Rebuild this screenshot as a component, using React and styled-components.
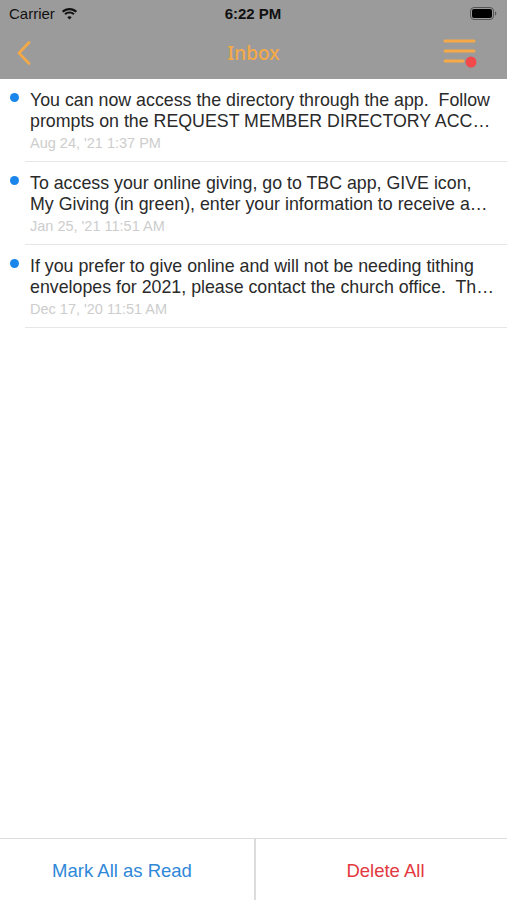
import React from 'react';
import styled, { createGlobalStyle } from 'styled-components';

const GlobalStyle = createGlobalStyle`
  html, body { margin: 0; padding: 0; background: #fff; }
  body { font-family: "Liberation Sans", Arial, sans-serif; }
`;

const Screen = styled.div`
  width: 507px;
  height: 900px;
  display: flex;
  flex-direction: column;
  background: #fff;
`;

const Header = styled.div`
  background: #9b9b9b;
`;

const StatusBar = styled.div`
  height: 27px;
  display: flex;
  align-items: center;
  justify-content: space-between;
  padding: 0 10px 0 9px;
  font-size: 15px;
  color: #111;
`;

const StatusLeft = styled.div`
  display: flex;
  align-items: center;
  gap: 6px;
  width: 120px;
`;

const Clock = styled.div`
  font-weight: bold;
  font-size: 15px;
`;

const StatusRight = styled.div`
  width: 120px;
  display: flex;
  justify-content: flex-end;
`;

const NavBar = styled.div`
  height: 52px;
  display: flex;
  align-items: center;
  justify-content: space-between;
  padding: 0 28px 0 16px;
`;

const NavTitle = styled.div`
  color: #f5a947;
  font-size: 19px;
  font-weight: 500;
  font-family: "Noto Sans", "Liberation Sans", sans-serif;
  padding-left: 12px;
`;

const NavSide = styled.div`
  width: 40px;
  display: flex;
  justify-content: ${p => (p.$right ? 'flex-end' : 'flex-start')};
`;

const List = styled.div`
  flex: 1;
`;

const Row = styled.div`
  display: flex;
  padding-left: 10px;
`;

const DotCol = styled.div`
  width: 20px;
  padding-top: 14px;
`;

const Dot = styled.div`
  width: 9px;
  height: 9px;
  border-radius: 50%;
  background: #1a86ec;
`;

const Body = styled.div`
  flex: 1;
  min-width: 0;
  border-bottom: 1px solid #e6e6e6;
  margin-left: -5px;
  padding: 11px 10px 9px 5px;
`;

const Line = styled.div`
  font-size: 17.8px;
  line-height: 21px;
  color: #2a2a2a;
  white-space: pre;
  overflow: hidden;
  text-overflow: ellipsis;
  padding-right: 2px;
`;

const Stamp = styled.div`
  font-size: 14.5px;
  color: #cdcdcd;
  margin-top: 3px;
  line-height: 17px;
`;

const Footer = styled.div`
  height: 61px;
  border-top: 1px solid #dcdcdc;
  display: grid;
  grid-template-columns: 254px 1fr;
`;

const FooterButton = styled.div`
  display: flex;
  align-items: center;
  justify-content: center;
  font-size: 18.5px;
  color: ${p => p.$color};
  border-left: ${p => (p.$divider ? '2px solid #dcdcdc' : 'none')};
  padding: 2px ${p => (p.$divider ? '0' : '10px')} 0 ${p => (p.$divider ? '8px' : '0')};
`;

const messages = [
  {
    first: 'You can now access the directory through the app.  Follow',
    rest: 'prompts on the REQUEST MEMBER DIRECTORY ACCESS screen to complete the request.',
    date: "Aug 24, '21 1:37 PM",
  },
  {
    first: 'To access your online giving, go to TBC app, GIVE icon,',
    rest: 'My Giving (in green), enter your information to receive an email.',
    date: "Jan 25, '21 11:51 AM",
  },
  {
    first: 'If you prefer to give online and will not be needing tithing',
    rest: 'envelopes for 2021, please contact the church office.  Thank you.',
    date: "Dec 17, '20 11:51 AM",
  },
];

const Wifi = () => (
  <svg width="17" height="13" viewBox="0 0 17 13">
    <path d="M8.5 3.2c2.4 0 4.5.9 6.1 2.4l1.5-1.6C14.1 2.1 11.4 1 8.5 1S2.9 2.1.9 4l1.5 1.6C4 4.1 6.1 3.2 8.5 3.2z" fill="#111" />
    <path d="M8.5 6.6c1.4 0 2.7.5 3.7 1.4l1.5-1.6C12.3 5.1 10.5 4.4 8.5 4.4S4.7 5.1 3.3 6.4L4.8 8c1-.9 2.3-1.4 3.7-1.4z" fill="#111" />
    <path d="M8.5 12.5l2.2-2.3c-.6-.6-1.4-.9-2.2-.9s-1.6.3-2.2.9z" fill="#111" />
  </svg>
);

const Battery = () => (
  <svg width="27" height="13" viewBox="0 0 27 13">
    <rect x="0.5" y="0.5" width="23" height="12" rx="3.5" fill="none" stroke="#555" strokeWidth="1" />
    <rect x="2" y="2" width="20" height="9" rx="2" fill="#000" />
    <path d="M25 4.5v4c.8-.3 1.3-1.1 1.3-2s-.5-1.7-1.3-2z" fill="#555" />
  </svg>
);

const BackIcon = () => (
  <svg width="16" height="24" viewBox="0 0 16 24">
    <path d="M13 1.5L3 12l10 10.5" fill="none" stroke="#f5a947" strokeWidth="2.6" strokeLinecap="round" strokeLinejoin="round" />
  </svg>
);

const MenuIcon = () => (
  <svg width="36" height="30" viewBox="0 0 36 30">
    <line x1="2" y1="3" x2="31" y2="3" stroke="#f5a947" strokeWidth="3" strokeLinecap="round" />
    <line x1="2" y1="13" x2="31" y2="13" stroke="#f5a947" strokeWidth="3" strokeLinecap="round" />
    <line x1="2" y1="23" x2="20" y2="23" stroke="#f5a947" strokeWidth="3" strokeLinecap="round" />
    <circle cx="28" cy="24" r="5.5" fill="#f24a4a" />
  </svg>
);

export default function App() {
  return (
    <>
      <GlobalStyle />
      <Screen>
        <Header>
          <StatusBar>
            <StatusLeft>
              <span>Carrier</span>
              <Wifi />
            </StatusLeft>
            <Clock>6:22 PM</Clock>
            <StatusRight>
              <Battery />
            </StatusRight>
          </StatusBar>
          <NavBar>
            <NavSide>
              <BackIcon />
            </NavSide>
            <NavTitle>Inbox</NavTitle>
            <NavSide $right>
              <MenuIcon />
            </NavSide>
          </NavBar>
        </Header>
        <List>
          {messages.map(m => (
            <Row key={m.date}>
              <DotCol>
                <Dot />
              </DotCol>
              <Body>
                <Line>{m.first}</Line>
                <Line>{m.rest}</Line>
                <Stamp>{m.date}</Stamp>
              </Body>
            </Row>
          ))}
        </List>
        <Footer>
          <FooterButton $color="#2f87d8">Mark All as Read</FooterButton>
          <FooterButton $color="#e2383e" $divider>Delete All</FooterButton>
        </Footer>
      </Screen>
    </>
  );
}
